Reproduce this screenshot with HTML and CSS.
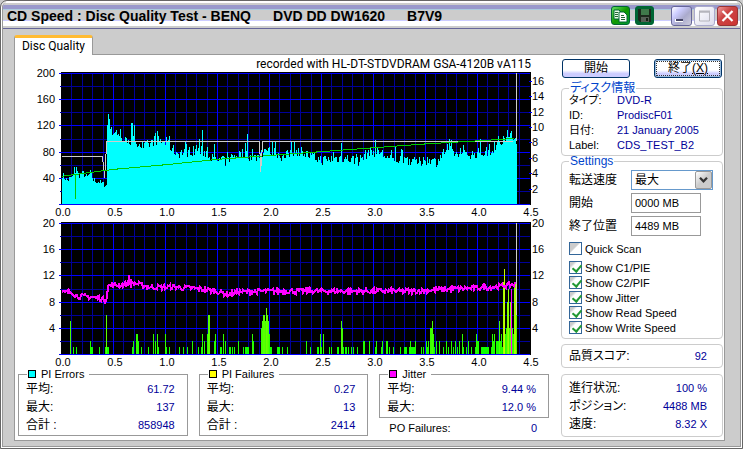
FILE: index.html
```html
<!DOCTYPE html>
<html lang="ja">
<head>
  <meta charset="utf-8">
  <meta name="viewport" content="width=device-width, initial-scale=1.0">
  <title>CD Speed : Disc Quality Test</title>
  <link rel="stylesheet" href="styles.css">
</head>
<body>
  <div class="window">
    <header class="titlebar">
      <h1 class="title"><span>CD Speed : Disc Quality Test - BENQ</span><span>DVD DD DW1620</span><span>B7V9</span></h1>
      <div class="tools">
        <button class="tool copy" aria-label="Copy">
          <svg viewBox="0 0 19 19" width="19" height="19">
            <path d="M3 4h5l2 2v7H3z" fill="#e8ffe8" stroke="#063" />
            <path d="M8 6h5l3 3v7H8z" fill="#fff" stroke="#063" />
            <path d="M4 6.500h3M4 8.500h3M4 10.500h3M10 9.500h3M10 11.500h4M10 13.500h4" stroke="#263" />
          </svg>
        </button>
        <button class="tool save" aria-label="Save">
          <svg viewBox="0 0 19 19" width="19" height="19">
            <path d="M3 3h13v13H5l-2-2z" fill="#1c2a1c" />
            <path d="M6 3h8v6H6z" fill="#3f7a4a" />
            <path d="M6 11h8v5H6z" fill="#555f55" />
            <path d="M11 12h2v3h-2z" fill="#142014" />
          </svg>
        </button>
      </div>
      <div class="controls">
        <button class="control" aria-label="Minimize">
          <svg viewBox="0 0 19 18" width="19" height="18"><path d="M3 12h8v3H3z" fill="#fff" /><path d="M4 12h7v2H4z" fill="#446" /></svg>
        </button>
        <button class="control max" aria-label="Maximize">
          <svg viewBox="0 0 19 18" width="19" height="18"><path d="M4.500 5h10v9h-10z" fill="none" stroke="#b4b4bc" /><path d="M4 4.500h11" stroke="#b4b4bc" stroke-width="2" /></svg>
        </button>
        <button class="control close" aria-label="Close">
          <svg viewBox="0 0 19 18" width="19" height="18"><path d="M4.500 4l10 10M14.500 4l-10 10" stroke="#fff" stroke-width="2.200" /></svg>
        </button>
      </div>
    </header>

    <nav class="tabs"><button class="tab">Disc Quality</button></nav>

    <main class="page">
      <section class="results">
        <p class="recorder">recorded with HL-DT-STDVDRAM GSA-4120B vA115</p>
        <svg class="chart" id="pieChart" viewBox="0 0 530 146"></svg>
        <svg class="chart" id="pifChart" viewBox="0 0 530 146"></svg>

        <div class="stats">
          <fieldset class="stat">
            <legend><i class="swatch cyan"></i>PI Errors</legend>
            <dl class="rows">
              <div><dt>平均:</dt><dd>61.72</dd></div>
              <div><dt>最大:</dt><dd>137</dd></div>
              <div><dt>合計 :</dt><dd>858948</dd></div>
            </dl>
          </fieldset>
          <fieldset class="stat">
            <legend><i class="swatch yellow"></i>PI Failures</legend>
            <dl class="rows">
              <div><dt>平均:</dt><dd>0.27</dd></div>
              <div><dt>最大:</dt><dd>13</dd></div>
              <div><dt>合計 :</dt><dd>2414</dd></div>
            </dl>
          </fieldset>
          <div>
            <fieldset class="stat">
              <legend><i class="swatch magenta"></i>Jitter</legend>
              <dl class="rows">
                <div><dt>平均:</dt><dd>9.44 %</dd></div>
                <div><dt>最大:</dt><dd>12.0 %</dd></div>
              </dl>
            </fieldset>
            <dl class="rows po"><div><dt>PO Failures:</dt><dd>0</dd></div></dl>
          </div>
        </div>
      </section>

      <aside class="side">
        <div class="buttons">
          <button class="push">開始</button>
          <button class="push focused">終了<u>(X)</u></button>
        </div>

        <fieldset class="group disc">
          <legend>ディスク情報</legend>
          <dl>
            <dt>タイプ:</dt><dd>DVD-R</dd>
            <dt>ID:</dt><dd>ProdiscF01</dd>
            <dt>日付:</dt><dd>21 January 2005</dd>
            <dt>Label:</dt><dd>CDS_TEST_B2</dd>
          </dl>
        </fieldset>

        <fieldset class="group settings">
          <legend>Settings</legend>
          <div class="fields">
            <label for="speed">転送速度</label>
            <div class="combo">
              <select id="speed"><option>最大</option></select>
              <svg class="arrow" viewBox="0 0 17 17" width="17" height="17"><path d="M4.500 6l4 4 4-4" fill="none" stroke="#333" stroke-width="2.500" /></svg>
            </div>
            <label for="start">開始</label>
            <input id="start" type="text" value="0000 MB">
            <label for="end">終了位置</label>
            <input id="end" type="text" value="4489 MB">
          </div>
          <div class="checks">
            <label class="quick"><input type="checkbox">Quick Scan</label>
            <label><input type="checkbox" checked>Show C1/PIE</label>
            <label><input type="checkbox" checked>Show C2/PIF</label>
            <label><input type="checkbox" checked>Show Jitter</label>
            <label><input type="checkbox" checked>Show Read Speed</label>
            <label><input type="checkbox" checked>Show Write Speed</label>
          </div>
        </fieldset>

        <div class="group score">
          <dl class="rows"><div><dt>品質スコア:</dt><dd>92</dd></div></dl>
        </div>

        <div class="group progress">
          <dl class="rows">
            <div><dt>進行状況:</dt><dd>100 %</dd></div>
            <div><dt>ポジション:</dt><dd>4488 MB</dd></div>
            <div><dt>速度:</dt><dd>8.32 X</dd></div>
          </dl>
        </div>
      </aside>
    </main>
  </div>
  <script src="charts.js"></script>
</body>
</html>
```

FILE: styles.css
```css
* { box-sizing: border-box; }

body {
  margin: 0;
  background: #ccc;
  color: #000;
  font-family: "Liberation Sans", "Noto Sans CJK JP", sans-serif;
  font-size: 12px;
  font-feature-settings: "palt";
}

button, input, select { font: inherit; color: inherit; }
dl, dd, p, h1 { margin: 0; }
fieldset { margin: 0; padding: 0; min-width: 0; }

.window {
  display: flex;
  flex-direction: column;
  min-height: 100vh;
  border: 1px solid #666;
  border-radius: 7px 7px 0 0;
  box-shadow: inset 0 0 0 1px #fff, inset 0 0 0 2px #999;
  padding: 0 2px 2px;
}

/* title bar */
.titlebar {
  display: flex;
  align-items: center;
  height: 28px;
  padding: 2px 2px 0 4px;
  border-bottom: 1px solid #669;
  border-radius: 6px 6px 0 0;
  background: linear-gradient(#fff 0 2px, #ccc 2px 4px, #99c 4px 8px, #acd 8px 9px, #ccc 9px 19px, #ccf 19px 20px, #fff 20px 25px, #ccc 25px);
}
.title {
  display: flex;
  flex: 1;
  gap: 22px;
  font-size: 14px;
  line-height: 16px;
  white-space: nowrap;
}
.tools { display: flex; gap: 5px; margin-right: 17px; }
.tool {
  display: flex;
  width: 19px;
  height: 19px;
  padding: 0;
  border: 1px solid #063;
  border-radius: 3px;
  background: linear-gradient(135deg, #6d6, #190 50%, #093);
}
.tool svg { margin: -1px; }
.tool.save { background: #063; }
.controls { display: flex; gap: 2px; }
.control {
  display: flex;
  width: 21px;
  height: 20px;
  padding: 0;
  border: 1px solid #669;
  border-radius: 3px;
  background: linear-gradient(135deg, #fff, #ccf 30%, #aac 60%, #ccd);
}
.control.max { border-color: #aac; background: linear-gradient(135deg, #fff, #dde); }
.control.close { border-color: #933; background: linear-gradient(135deg, #e99, #c44 40%, #c33); }

/* tab and its page */
.tabs { height: 25px; padding: 6px 11px 0; }
.tab {
  position: relative;
  display: block;
  width: 79px;
  height: 20px;
  padding: 0;
  border: 1px solid #999;
  border-top: 3px solid #fb3;
  border-bottom: 0;
  border-radius: 3px 3px 0 0;
  background: #fff;
  font-family: Roboto, sans-serif;
  line-height: 15px;
}
.page {
  display: grid;
  grid-template-columns: 1fr 163px;
  flex: 1;
  margin: 0 15px 5px 11px;
  border: 1px solid #999;
  background: #fff;
}

/* left column */
.recorder {
  padding-right: 30px;
  height: 16px;
  line-height: 18px;
  font-family: Roboto, sans-serif;
  text-align: right;
}
.chart {
  display: block;
  width: calc(100% - 16px);
  margin: 0 0 4px 5px;
  overflow: visible;
  font-size: 11px;
}
#pifChart { margin-bottom: 0; }

.stats {
  display: grid;
  grid-template-columns: repeat(3, 1fr);
  align-items: start;
  gap: 11px;
  padding: 1px 12px 0 3px;
}
.stat { border: 1px solid #999; padding: 0 12px 1px 7px; }
.stat legend {
  display: flex;
  align-items: center;
  gap: 5px;
  margin-left: 1px;
  padding: 0 5px 0 1px;
  height: 12px;
  line-height: 12px;
  background: #fff;
}
.stat legend, .rows dd, .po dt { font-size: 11px; }
.swatch { width: 8px; height: 8px; border: 1px solid #000; }
.cyan { background: #0ff; }
.yellow { background: #ff0; }
.magenta { background: #f0f; }

.rows div { display: flex; justify-content: space-between; height: 18px; line-height: 18px; }
dd { color: #009; }
.po { padding: 1px 12px 0 10px; }

/* right column */
.side { padding: 4px 1px 2px 0; }
.buttons { display: flex; justify-content: space-between; padding: 0 1px; }
.push {
  width: 68px;
  height: 19px;
  padding: 0;
  border: 1px solid #036;
  border-radius: 3px;
  background: linear-gradient(#fff 0 60%, #ccf 80%);
  line-height: 15px;
}
.focused { box-shadow: inset 0 0 0 1px #9bd; outline: 1px dotted #333; outline-offset: -3px; }

.group { border: 1px solid #ccc; border-radius: 4px; padding: 0 7px; }
.group legend {
  padding: 0 1px;
  color: #04c;
  height: 14px;
  line-height: 14px;
}
.disc { margin-top: 3px; padding-bottom: 2px; }
.disc dl {
  display: grid;
  grid-template-columns: 48px 1fr;
  margin-top: -2px;
  line-height: 15px;
  white-space: nowrap;
}
.disc dd, .disc dt { height: 15px; font-size: 11px; }

.settings { margin-top: -2px; padding-bottom: 3px; }
.fields {
  display: grid;
  grid-template-columns: 54px 1fr;
  gap: 3px 8px;
  align-items: center;
  margin-top: 2px;
  line-height: 18px;
}
.fields input {
  width: 70px;
  height: 20px;
  padding: 0 3px;
  border: 1px solid #999;
  background: #fff;
  font-size: 11px;
}
.combo { position: relative; width: 82px; height: 20px; }
.combo select {
  display: block;
  width: 100%;
  height: 20px;
  padding: 0 3px;
  appearance: none;
  border: 1px solid #69c;
  border-radius: 0;
  background: #fff;
}
.arrow {
  position: absolute;
  top: 1px;
  right: 1px;
  width: 17px;
  height: 18px;
  border: 1px solid #999;
  border-radius: 2px;
  background: linear-gradient(135deg, #fff, #ccc 50%);
  pointer-events: none;
}
.checks { margin-top: 5px; font-size: 11px; }
.checks label { display: flex; align-items: center; gap: 3px; height: 15px; white-space: nowrap; }
.checks .quick { margin-bottom: 4px; }
.checks input {
  appearance: none;
  width: 13px;
  height: 13px;
  margin: 0;
  border: 1px solid #369;
  background: linear-gradient(135deg, #ccc 0 40%, #fff 50%);
}
.checks input:checked { background: linear-gradient(135deg, #ccc 0 20%, #fff 35%); }
.checks input:checked::after {
  content: "";
  display: block;
  width: 4px;
  height: 7px;
  margin: 1px 0 0 4px;
  border: solid #293;
  border-width: 0 2px 2px 0;
  transform: rotate(40deg);
}

.score { margin-top: 5px; padding: 2px 15px 2px 7px; }
.progress { margin-top: 6px; padding: 4px 15px 3px 7px; }
```

FILE: charts.js
```js
const LEFT = 42;      // x of 0.0 GB
const WIDTH = 468;    // 4.5 GB
const TOP = 2;
const HEIGHT = 131;
const GB = WIDTH / 4.5;

// average curves, [GB, value]
const pie = [
  [0, 44], [0.05, 36], [0.1, 42], [0.13, 52], [0.16, 44], [0.2, 47], [0.24, 40], [0.27, 48], [0.3, 36],
  [0.35, 34], [0.4, 30], [0.43, 28], [0.431, 112], [0.5, 110], [0.55, 104], [0.62, 95], [0.7, 98], [0.78, 86],
  [0.85, 93], [0.9, 98], [1, 92], [1.05, 86], [1.1, 78], [1.2, 80], [1.3, 82], [1.4, 78], [1.45, 68],
  [1.57, 64], [1.65, 74], [1.75, 78], [1.85, 70], [1.95, 82], [2.05, 80], [2.13, 70], [2.2, 80], [2.3, 80],
  [2.4, 72], [2.5, 67], [2.7, 71], [2.85, 66], [2.95, 80], [3.05, 80], [3.15, 68], [3.3, 70], [3.4, 63],
  [3.5, 67], [3.6, 65], [3.7, 85], [3.8, 75], [3.95, 76], [4.1, 80], [4.2, 92], [4.3, 98], [4.37, 100]
];
const pieSpikes = {
  12: 57, 14: 56, 45: 120, 46: 137, 47: 130, 48: 115, 69: 123, 70: 124, 72: 120, 92: 104, 93: 108, 100: 94,
  104: 102, 137: 100, 140: 113, 152: 92, 183: 93, 185: 107, 229: 94, 232: 94, 279: 93, 313: 97, 333: 87,
  387: 100, 418: 100, 441: 104, 445: 113, 448: 109, 449: 111
};
const readSpeed = [[0, 3.6], [0.5, 4.5], [1, 5.1], [1.5, 5.8], [2, 6.3], [2.5, 6.8], [3, 7.3], [3.5, 7.8], [4, 8.2], [4.35, 8.5]];
const writeSpeed = [[0, 6.1], [0.39, 6.1], [0.41, 3.4], [0.43, 8.05], [1.9, 8.05], [1.91, 4.2], [1.93, 8.05], [4.34, 8.05]];
const jitter = [
  [0, 9.3], [0.1, 9.5], [0.14, 8.8], [0.3, 8.7], [0.42, 8.2], [0.43, 8.5], [0.44, 10.4], [0.6, 10.6], [0.7, 10.8],
  [0.85, 10.2], [1.1, 10.2], [1.35, 9.9], [1.5, 9.5], [1.6, 9.1], [1.7, 9.5], [2, 9.6], [2.5, 9.6],
  [3.4, 9.6], [3.7, 9.9], [4, 10.1], [4.2, 10.3], [4.37, 10.7]
];

// PI failures, [offset, value, value of the next pixel, ...]
const pif = [
  [8, 5], [11, 1], [14, 1], [28, 2, 1, 1], [37, 1], [43, 1, 6, 1, 1], [70, 1, 2], [74, 3, 3, 2], [79, 1], [86, 1],
  [91, 3], [93, 2], [95, 3, 1], [103, 3, 1], [107, 1], [117, 1], [121, 1], [125, 1], [130, 2], [136, 1],
  [139, 1, 3], [142, 2], [145, 3, 6, 6], [152, 2, 3], [158, 1, 1], [161, 3], [163, 2], [167, 1, 1], [170, 1],
  [172, 1], [176, 2], [181, 1], [183, 1, 1, 1, 1], [190, 3, 2], [199, 4, 5, 6, 6, 5, 7, 6, 5, 3, 1, 1],
  [215, 1, 1, 1], [220, 1], [225, 1], [244, 2], [248, 1], [255, 1, 1], [258, 3, 1], [261, 3], [267, 1], [269, 1],
  [275, 1, 1], [279, 5, 4, 1], [283, 1, 1], [286, 1], [289, 1], [291, 1], [295, 1], [301, 2, 2], [307, 2],
  [313, 1, 2], [319, 1, 2], [324, 2, 2], [327, 1], [331, 1], [338, 1], [342, 1, 1, 1], [347, 1, 2, 1, 1, 1, 1, 2],
  [359, 1], [361, 1], [364, 2, 1, 2], [368, 4, 4, 5, 3, 1], [374, 2], [377, 2], [381, 1], [384, 2], [386, 1],
  [389, 2], [391, 1], [393, 2], [395, 1], [397, 2], [400, 3, 1], [404, 1], [406, 2], [409, 1],
  [413, 1, 3, 2, 2], [419, 1, 1, 1, 1, 1, 1, 1, 1], [429, 1, 3, 2, 3], [434, 2, 2, 2, 5, 2, 3, 1, 11, 13, 3, 4, 8, 10, 4, 8, 2, 4, 3, 11, 11, 6]
];

let seed = 7;
function noise() {
  seed = (seed * 16807) % 2147483647;
  return seed / 2147483647 * 2 - 1;
}

function valueAt(points, t) {
  for (let i = 1; i < points.length; i++) {
    const [x0, y0] = points[i - 1];
    const [x1, y1] = points[i];
    if (t <= x1) return y0 + (y1 - y0) * (t - x0) / (x1 - x0);
  }
  return points[points.length - 1][1];
}

function yOf(value, max) {
  return TOP + HEIGHT - value / max * HEIGHT;
}

function line(x1, y1, x2, y2, color) {
  return `<path d="M${x1} ${y1}L${x2} ${y2}" stroke="${color}" shape-rendering="crispEdges"/>`;
}

function curve(points, max, color, width = 1) {
  const d = points.map(([t, v]) => `${LEFT + t * GB} ${yOf(v, max)}`).join("L");
  return `<path d="M${d}" fill="none" stroke="${color}" stroke-width="${width}" shape-rendering="crispEdges"/>`;
}

function label(x, y, text, anchor) {
  return `<text x="${x}" y="${y + 4}" text-anchor="${anchor}">${text}</text>`;
}

function grid(max) {
  let out = `<rect x="${LEFT - 1}" y="${TOP - 1}" width="${WIDTH + 2}" height="${HEIGHT + 2}"/>`;
  for (let pass = 0; pass < 2; pass++) {
    const color = pass ? "#00f" : "#009";
    for (let i = 0; i <= 45; i++) {
      if ((i % 5 === 0) !== !!pass || i === 0 || i === 45) continue;
      const x = Math.round(LEFT + i * GB / 10) - 0.5;
      out += line(x, TOP, x, TOP + HEIGHT, color);
    }
    for (let i = 0; i <= 10; i++) {
      if ((i % 2 === 0) !== !!pass) continue;
      const y = Math.round(yOf(max * i / 10, max)) + 0.5;
      out += line(LEFT - (pass ? 3 : 2), y, LEFT + WIDTH, y, color);
    }
  }
  for (let i = 1; i <= 5; i++) out += label(35, yOf(max * i / 5, max), max * i / 5, "end");
  for (let i = 0; i <= 9; i++) out += label(LEFT + 1 + i * GB / 2, 141, (i / 2).toFixed(1), "middle");
  return out;
}

function drawPie() {
  let out = grid(200);
  let bars = "";
  for (let x = 0; x < 455; x++) {
    const t = x / GB;
    let v = valueAt(pie, t) + noise() * (t < 0.43 ? 5 : 8);
    if (t > 0.43 && noise() > 0.8) v += 9;
    v = pieSpikes[x] || v;
    const y = Math.round(yOf(v, 200));
    bars += `M${LEFT + x} ${y}h1V${TOP + HEIGHT}h-1z`;
  }
  out += `<path d="${bars}" fill="#0ff" shape-rendering="crispEdges"/>`;
  out += curve(writeSpeed, 17, "#ccc");
  out += curve(readSpeed, 17, "#0c0");
  out += line(LEFT + 13.5, yOf(3.8, 17), LEFT + 13.5, yOf(0.6, 17), "#0c0");
  out += line(LEFT + 454.5, TOP, LEFT + 454.5, yOf(8.2, 17), "#ccc");
  for (let s = 2; s <= 16; s += 2) {
    const y = yOf(s, 17);
    out += line(509, Math.round(y) + 0.5, 512, Math.round(y) + 0.5, "#00f");
    out += label(512, y, s, "start");
  }
  document.getElementById("pieChart").innerHTML = out;
}

function drawPif() {
  let out = grid(20);
  for (const [start, ...values] of pif) {
    values.forEach((v, i) => {
      const x = LEFT + start + i + 0.5;
      out += line(x, TOP + HEIGHT, x, Math.round(yOf(v, 20)), `rgb(${v * 15}, 255, 0)`);
    });
  }
  const points = [];
  for (let x = 0; x < 455; x++) {
    const v = x === 67 ? 12 : valueAt(jitter, x / GB) + noise() * 0.4;
    points.push([x / GB, v]);
  }
  out += curve(points, 20, "#f0f", 2);
  out += line(LEFT + 449.5, yOf(10, 20), LEFT + 449.5, TOP + HEIGHT, "#f0f");
  out += line(LEFT + 454.5, TOP, LEFT + 454.5, yOf(6, 20), "#ccc");
  for (let v = 4; v <= 20; v += 4) out += label(512, yOf(v, 20), v, "start");
  document.getElementById("pifChart").innerHTML = out;
}

drawPie();
drawPif();
```
